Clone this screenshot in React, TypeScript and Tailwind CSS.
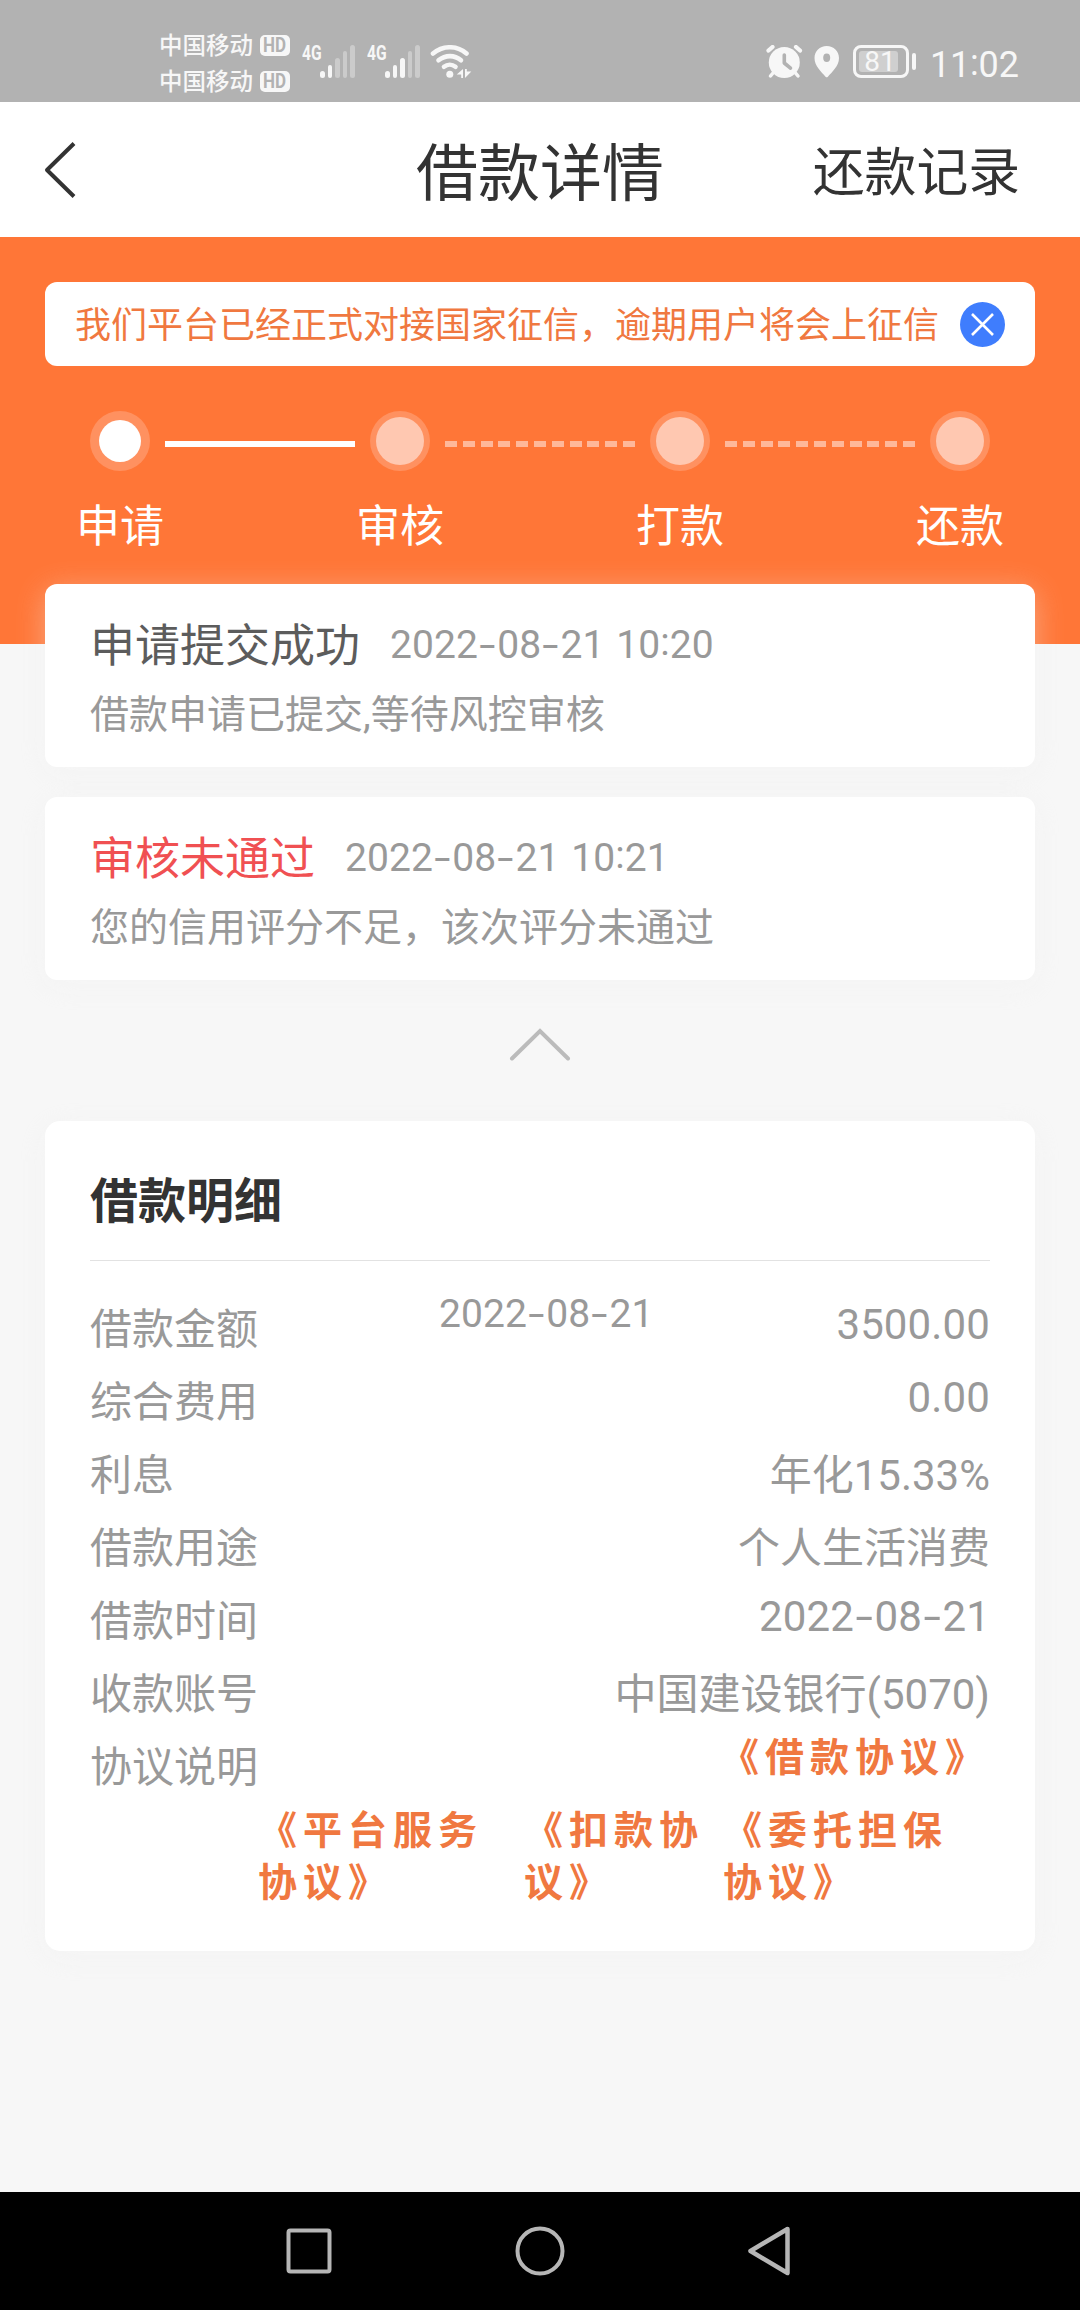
import React from "react";

const details = [
  { label: "综合费用", value: "0.00", numeric: true },
  { label: "利息", value: "年化15.33%", numeric: false },
  { label: "借款用途", value: "个人生活消费", numeric: false },
  { label: "借款时间", value: "2022-08-21", numeric: true },
  { label: "收款账号", value: "中国建设银行(5070)", numeric: false },
];

/* Digits with widened hyphens and raised colons */
function Num({ text }: { text: string }) {
  return (
    <span className="tracking-[0.003em] whitespace-pre">
      {text.split(/([-: ])/).map((part, i) => {
        if (part === "-")
          return (
            <span key={i} className="inline-block w-[0.49em] scale-x-150 text-center">
              -
            </span>
          );
        if (part === ":")
          return (
            <span key={i} className="relative -top-[0.07em]">
              :
            </span>
          );
        if (part === " ")
          return (
            <span key={i} className="tracking-[0.05em]">
              {" "}
            </span>
          );
        return <span key={i}>{part}</span>;
      })}
    </span>
  );
}

function Carrier() {
  return (
    <div className="flex h-[36px] items-center">
      <span className="w-[101px] pt-[1px] text-[23.5px] leading-[36px] font-medium">中国移动</span>
      <span className="flex h-[21px] w-[30px] items-center justify-center rounded-[5px] bg-[#f7f7f7] text-[20px] leading-[21px] font-bold text-[#b2b2b2]">
        <span className="scale-x-85">HD</span>
      </span>
    </div>
  );
}

function Signal({ active }: { active: number }) {
  const heights = [7, 13, 20, 27, 33];
  return (
    <div className="flex h-[33px] w-[53px]">
      <span className="h-4 w-[18px] origin-left scale-x-78 text-[20px] leading-4 font-bold">4G</span>
      <div className="flex items-end gap-[3px]">
        {heights.map((h, i) => (
          <span
            key={h}
            className={i < active ? "w-[4.6px] rounded-full bg-[#f7f7f7]" : "w-[4.6px] rounded-full bg-[#cbcbcb]"}
            style={{ height: h }}
          />
        ))}
      </div>
    </div>
  );
}

function StatusBar() {
  return (
    <div className="flex h-[102px] shrink-0 bg-[#b2b2b2] text-[#f7f7f7]">
      <div className="ml-[159px] w-[143px] pt-[27px]">
        <Carrier />
        <Carrier />
      </div>
      <div className="flex pt-[45px]">
        <Signal active={2} />
        <div className="ml-3">
          <Signal active={3} />
        </div>
        <svg className="ml-[10px] h-[34px] w-[43px]" viewBox="0 0 43 34" fill="none" stroke="#f7f7f7" strokeWidth="4.6" strokeLinecap="round">
          <path d="M3 8.5C13 0.2 27 0.2 36.500 8.500" />
          <path d="M8.500 15.300C15.500 9.700 24.500 9.700 31 15.300" />
          <path d="M14 21.800C17.500 19 22 19 25.500 21.800" />
          <circle cx="19.800" cy="29.300" r="3.500" fill="#f7f7f7" stroke="none" />
          <path d="M33 24v9h-1.800v-3.500h-4.500zM35 33v-9h1.800v2.500h4.500z" fill="#f7f7f7" stroke="none" />
        </svg>
      </div>
      <div className="ml-auto flex pt-[45px]">
        <svg className="h-[34px] w-[37px]" viewBox="0 0 37 34" fill="none" strokeLinecap="round">
          <circle cx="18.300" cy="17.500" r="15.500" fill="#f7f7f7" />
          <path d="M2.500 5.500L6.500 2M34 5.500L30 2" stroke="#f7f7f7" strokeWidth="4.200" />
          <path d="M7 28L4.500 31M29.500 28L32 31" stroke="#f7f7f7" strokeWidth="3.500" />
          <path d="M18.300 10V18L24.500 23.200" stroke="#b2b2b2" strokeWidth="3.600" strokeLinejoin="round" />
        </svg>
        <svg className="ml-[11px] h-[34px] w-[26px]" viewBox="0 0 26 34">
          <path fillRule="evenodd" fill="#f7f7f7" d="M12.700 1C5.700 1 .5 6.200.5 13c0 8 7 14 11 18.700q1.200 1.200 2.400 0C18 27 25 21 25 13 25 6.200 19.700 1 12.700 1zm0 7.500a3.300 4 0 0 1 0 8.500 3.300 4 0 0 1 0-8.500z" />
        </svg>
        <div className="ml-[13px] flex h-[33px] w-[56px] rounded-[8px] border-3 border-[#f7f7f7] p-[3px]">
          <div className="flex h-[21px] w-[39px] items-center justify-center rounded-[3px] bg-[#cfcfcf] pl-[4px] text-[28px] leading-[21px]">81</div>
        </div>
        <span className="mt-[8px] ml-[3px] h-[17px] w-[4.500px] rounded-full bg-[#f7f7f7]" />
        <span className="mr-[62px] ml-[14px] h-[38px] w-[88px] pt-[1px] text-[36px] leading-[38px] tracking-[-0.2px]">
          11<span className="relative -top-[2px]">:</span>02
        </span>
      </div>
    </div>
  );
}

function Header() {
  return (
    <header className="grid h-[135px] shrink-0 grid-cols-[1fr_auto_1fr] items-center bg-white text-[#333]">
      <svg className="ml-[43px] h-[60px] w-[36px]" viewBox="0 0 36 60" fill="none" stroke="#333" strokeWidth="4" strokeLinejoin="round">
        <path d="M31 3.500L4 30L31 56.500" />
      </svg>
      <h1 className="mt-[11px] text-[62px] leading-[80px]">借款详情</h1>
      <span className="mt-[8px] mr-[60px] text-right text-[51.8px] leading-[70px]">还款记录</span>
    </header>
  );
}

const Dashed = () => (
  <span className="mt-[30px] flex h-[6px] w-[190px] justify-between">
    {Array.from({ length: 11 }, (_, i) => (
      <span key={i} className="w-3 bg-[#ffb899]" />
    ))}
  </span>
);

function Dot({ active = false }: { active?: boolean }) {
  return (
    <span className="flex size-[60px] items-center justify-center rounded-full bg-[#ff9160]">
      <span className={active ? "size-[42px] rounded-full bg-white" : "size-[48px] rounded-full bg-[#ffc8b1]"} />
    </span>
  );
}

function Hero() {
  return (
    <section className="h-[407px] shrink-0 bg-[#ff7637] px-[45px] pt-[45px]">
      <div className="flex h-[84px] items-center justify-between rounded-[12px] bg-white px-[30px]">
        <span className="pt-[4px] text-[36px] leading-[50px] whitespace-nowrap text-[#f07840]">
          我们平台已经正式对接国家征信，逾期用户将会上征信
        </span>
        <svg className="size-[45px] shrink-0" viewBox="0 0 45 45">
          <circle cx="22.500" cy="22.500" r="22.500" fill="#3f7dfd" />
          <path d="M12 12L33 33M33 12L12 33" stroke="#fff" strokeWidth="2.600" />
        </svg>
      </div>
      <div className="mx-[45px] mt-[45px] flex justify-between">
        <Dot active />
        <span className="mt-[30px] h-[6px] w-[190px] bg-white" />
        <Dot />
        <Dashed />
        <Dot />
        <Dashed />
        <Dot />
      </div>
      <div className="mx-[31px] mt-[24px] flex justify-between text-[44px] leading-[64px] text-white">
        <span>申请</span>
        <span>审核</span>
        <span>打款</span>
        <span>还款</span>
      </div>
    </section>
  );
}

function StatusCard({ title, time, text, failed = false }: { title: string; time: string; text: string; failed?: boolean }) {
  return (
    <div className="h-[183px] rounded-[12px] bg-white px-[45px] pt-[35px] shadow-[0_6px_30px_rgba(240,240,240,0.4)]">
      <div className="flex h-[52px] items-center">
        <span className={failed ? "pt-[3px] text-[45px] leading-[52px] text-[#f05052]" : "pt-[3px] text-[45px] leading-[52px] text-[#5c5c5c]"}>
          {title}
        </span>
        <span className="ml-[30px] text-[39px] leading-[52px] text-[#999]">
          <Num text={time} />
        </span>
      </div>
      <p className="mt-[18px] text-[39px] leading-[52px] text-[#999]">{text}</p>
    </div>
  );
}

function Details() {
  return (
    <section className="mx-[45px] mt-[60px] h-[830px] rounded-[15px] bg-white px-[45px] pt-[48px] text-[42px] leading-[75px] text-[#999] shadow-[0_6px_30px_rgba(240,240,240,0.4)]">
      <h2 className="h-[91px] text-[48px] leading-[66px] font-bold text-[#333]">借款明细</h2>
      <div className="mb-[31px] h-px bg-[#e2e2e2]" />
      <div className="flex h-[73px]">
        <span className="w-[349px]">借款金额</span>
        <span className="text-[39px] leading-[44px]">
          <Num text="2022-08-21" />
        </span>
        <span className="ml-auto leading-[65px]">
          <Num text="3500.00" />
        </span>
      </div>
      {details.map((d) => (
        <div key={d.label} className="flex h-[73px] justify-between">
          <span>{d.label}</span>
          {d.numeric ? (
            <span className="leading-[65px]">
              <Num text={d.value} />
            </span>
          ) : (
            <span>{d.value}</span>
          )}
        </div>
      ))}
      <div className="flex h-[73px] justify-between">
        <span>协议说明</span>
        <a className="text-[39px] leading-[57px] font-bold tracking-[6px] text-[#f07840]">《借款协议》</a>
      </div>
      <div className="ml-[168px] flex pt-[2px] text-[39px] leading-[52px] font-bold tracking-[6px] text-[#f07840]">
        <a className="w-[266px]">《平台服务协议》</a>
        <a className="w-[199px]">《扣款协议》</a>
        <a className="w-[267px]">《委托担保协议》</a>
      </div>
    </section>
  );
}

export default function App() {
  return (
    <div className="flex h-[2310px] w-[1080px] flex-col overflow-hidden bg-[#f7f7f7] font-['Roboto','Noto_Sans_CJK_SC',sans-serif]">
      <StatusBar />
      <Header />
      <Hero />
      <main className="-mt-[60px] flex-1">
        <div className="mx-[45px] flex flex-col gap-[30px]">
          <StatusCard title="申请提交成功" time="2022-08-21 10:20" text="借款申请已提交,等待风控审核" />
          <StatusCard title="审核未通过" time="2022-08-21 10:21" text="您的信用评分不足，该次评分未通过" failed />
        </div>
        <svg className="mx-auto mt-[47px] block h-[34px] w-[62px]" viewBox="0 0 62 34" fill="none" stroke="#bbb" strokeWidth="4" strokeLinecap="round">
          <path d="M3 31.500L31 4L59 31.500" />
        </svg>
        <Details />
      </main>
      <nav className="flex h-[118px] shrink-0 items-center justify-between bg-black pr-[289px] pl-[286px]">
        <svg className="size-[46px]" viewBox="0 0 46 46" fill="none" stroke="#b6b6b6" strokeWidth="4">
          <rect x="2.500" y="2.500" width="41" height="41" rx="2" />
        </svg>
        <svg className="ml-[1px] size-[50px]" viewBox="0 0 50 50" fill="none" stroke="#b6b6b6" strokeWidth="4">
          <circle cx="25" cy="25" r="22.500" />
        </svg>
        <svg className="h-[50px] w-[44px]" viewBox="0 0 44 50" fill="none" stroke="#b6b6b6" strokeWidth="4.500" strokeLinejoin="round">
          <path d="M40.500 3L3.500 25L40.500 47Z" />
        </svg>
      </nav>
    </div>
  );
}
